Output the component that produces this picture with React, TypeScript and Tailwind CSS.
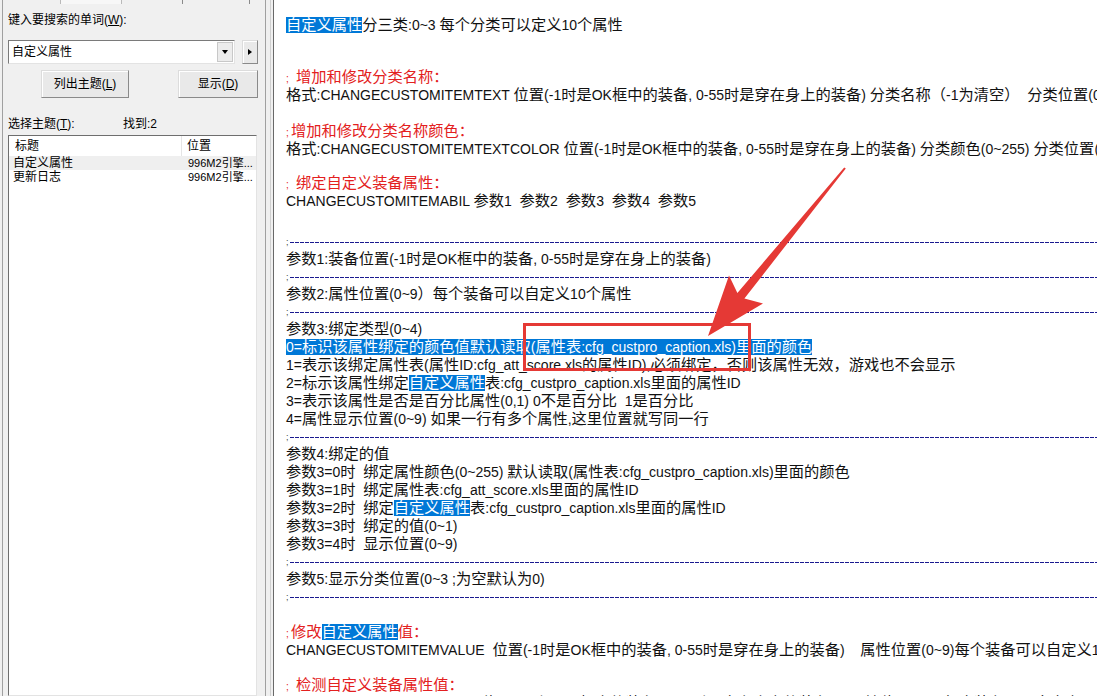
import React from 'react'

// CJK runs render a bit larger than the latin text, like the RichEdit font linking does
const CJK = /([\u3000-\u303f\u4e00-\u9fff\uff00-\uffef]+)/

const M = ({ t }: { t: string }) => (
  <>
    {t.split(CJK).map((s, i) =>
      i % 2 ? (
        <span key={i} className="text-[15.25px]">
          {s}
        </span>
      ) : (
        <React.Fragment key={i}>{s}</React.Fragment>
      )
    )}
  </>
)

const Hl = ({ t }: { t: string }) => (
  <span className="inline-block h-[16px] bg-[#0078d7] leading-[16px] text-white">
    <M t={t} />
  </span>
)

const Line = ({ children, className = '' }: { children: React.ReactNode; className?: string }) => (
  <div className={`h-[18px] whitespace-pre leading-[18px] ${className}`}>{children}</div>
)

const Note = ({ children, className = '', wide = false }: { children: React.ReactNode; className?: string; wide?: boolean }) => (
  <Line className={`text-[#e32020] ${className}`}>
    <span className={wide ? 'inline-block w-[10px] text-[10px]' : 'inline-block w-[5px] text-[10px]'}>;</span>
    {children}
  </Line>
)

const Sep = () => (
  <div className="flex h-[17px] items-center pt-[2px]">
    <span className="w-[4px] text-[9px] leading-none text-[#444]">;</span>
    <div className="h-px flex-1 bg-[repeating-linear-gradient(90deg,#1a1a90_0px,#1a1a90_4px,#ffffff_4px,#ffffff_5px)]" />
  </div>
)

const WinButton = ({ children, className = '' }: { children: React.ReactNode; className?: string }) => (
  <div
    className={`flex items-center justify-center border border-t-[#dcdcdc] border-l-[#dcdcdc] border-b-[#8a8a8a] border-r-[#8a8a8a] bg-[#e9e9e9] shadow-[inset_1px_1px_0_#ffffff] ${className}`}
  >
    {children}
  </div>
)

const LeftPanel = () => (
  <div className="flex w-[265px] shrink-0 flex-col bg-[#f0f0f0] text-[12px] text-black shadow-[inset_2px_0_0_#f0f0f0,inset_3px_0_0_#a0a0a0]">
    {/* tab strip remains */}
    <div className="flex h-[4px]">
      <div className="w-[61px] border-r border-[#b9b9b9]" />
      <div className="w-[61px] border-r border-[#b9b9b9] bg-[#f7f7f7]" />
      <div className="w-[61px] border-r border-[#8a8a8a]" />
      <div className="w-[67px] border-r border-[#8a8a8a]" />
    </div>

    <div className="mt-[9px] pl-[8px] leading-[14px]">
      键入要搜索的单词(<span className="underline">W</span>):
    </div>

    <div className="mt-[13px] flex pl-[8px]">
      <div className="flex h-[24px] w-[227px] items-center border border-t-[#7a7a7a] border-l-[#7a7a7a] border-b-[#e3e3e3] border-r-[#e3e3e3] bg-white">
        <span className="pl-[3px]">自定义属性</span>
        <div className="ml-auto mr-[1px] flex h-[20px] w-[16px] items-center justify-center border border-[#c8c8c8] bg-[#ececec]">
          <div className="h-0 w-0 border-x-[3.5px] border-t-[4px] border-x-transparent border-t-black" />
        </div>
      </div>
      <WinButton className="ml-[7px] h-[24px] w-[16px]">
        <div className="h-0 w-0 border-y-[3.5px] border-l-[4px] border-y-transparent border-l-black" />
      </WinButton>
    </div>

    <div className="mt-[6px] flex">
      <WinButton className="ml-[41px] h-[28px] w-[88px]">
        列出主题(<span className="underline">L</span>)
      </WinButton>
      <WinButton className="ml-[49px] h-[28px] w-[80px]">
        显示(<span className="underline">D</span>)
      </WinButton>
    </div>

    <div className="mt-[19px] flex pl-[8px] leading-[14px]">
      <span className="w-[115px]">
        选择主题(<span className="underline">T</span>):
      </span>
      <span>找到:2</span>
    </div>

    <div className="ml-[8px] mt-[4px] flex w-[249px] flex-1 flex-col border border-t-[#6e6e6e] border-l-[#6e6e6e] border-b-[#e3e3e3] border-r-[#e3e3e3] bg-white">
      <div className="flex h-[20px]">
        <div className="flex w-[173px] items-center border-r border-[#e5e5e5] pl-[6px]">标题</div>
        <div className="flex items-center pl-[5px]">位置</div>
      </div>
      <div className="flex h-[14px] bg-[#efefef] leading-[14px]">
        <div className="w-[173px] pl-[4px]">自定义属性</div>
        <div className="overflow-hidden whitespace-nowrap pl-[6px] text-[11px]">996M2引擎...</div>
      </div>
      <div className="flex h-[14px] leading-[14px]">
        <div className="w-[173px] pl-[4px]">更新日志</div>
        <div className="overflow-hidden whitespace-nowrap pl-[6px] text-[11px]">996M2引擎...</div>
      </div>
    </div>
  </div>
)

const Splitter = () => (
  <div className="flex w-[9px] shrink-0 bg-[#f0f0f0]">
    <div className="w-px bg-[#a0a0a0]" />
    <div className="w-[4px]" />
    <div className="w-px bg-[#d0d0d0]" />
    <div className="w-[2px]" />
    <div className="w-px bg-[#696969]" />
  </div>
)

const RightPane = () => (
  <div className="relative flex-1 overflow-hidden bg-white pl-[12px] pt-[16px] text-[14px] text-[#111]">
    <Line>
      <Hl t="自定义属性" />
      <M t="分三类:0~3 每个分类可以定义10个属性" />
    </Line>

    <Note wide className="mt-[34px]">
      <M t="增加和修改分类名称：" />
    </Note>
    <Line>
      <M t="格式:CHANGECUSTOMITEMTEXT 位置(-1时是OK框中的装备, 0-55时是穿在身上的装备) 分类名称（-1为清空）  分类位置(0~3)" />
    </Line>

    <Note className="mt-[18px]">
      <M t="增加和修改分类名称颜色：" />
    </Note>
    <Line>
      <M t="格式:CHANGECUSTOMITEMTEXTCOLOR 位置(-1时是OK框中的装备, 0-55时是穿在身上的装备) 分类颜色(0~255) 分类位置(0~3)" />
    </Line>

    <Note wide className="mt-[16px]">
      <M t="绑定自定义装备属性：" />
    </Note>
    <Line>
      <M t="CHANGECUSTOMITEMABIL 参数1  参数2  参数3  参数4  参数5" />
    </Line>

    <div className="mt-[23px]">
      <Sep />
    </div>
    <Line>
      <M t="参数1:装备位置(-1时是OK框中的装备, 0-55时是穿在身上的装备)" />
    </Line>
    <Sep />
    <Line>
      <M t="参数2:属性位置(0~9）每个装备可以自定义10个属性" />
    </Line>
    <Sep />
    <Line>
      <M t="参数3:绑定类型(0~4)" />
    </Line>
    <Line>
      <Hl t="0=标识该属性绑定的颜色值默认读取(属性表:cfg_custpro_caption.xls)里面的颜色" />
    </Line>
    <Line>
      <M t="1=表示该绑定属性表(属性ID:cfg_att_score.xls的属性ID),必须绑定，否则该属性无效，游戏也不会显示" />
    </Line>
    <Line>
      <M t="2=标示该属性绑定" />
      <Hl t="自定义属性" />
      <M t="表:cfg_custpro_caption.xls里面的属性ID" />
    </Line>
    <Line>
      <M t="3=表示该属性是否是百分比属性(0,1) 0不是百分比  1是百分比" />
    </Line>
    <Line>
      <M t="4=属性显示位置(0~9) 如果一行有多个属性,这里位置就写同一行" />
    </Line>
    <Sep />
    <Line>
      <M t="参数4:绑定的值" />
    </Line>
    <Line>
      <M t="参数3=0时  绑定属性颜色(0~255) 默认读取(属性表:cfg_custpro_caption.xls)里面的颜色" />
    </Line>
    <Line>
      <M t="参数3=1时  绑定属性表:cfg_att_score.xls里面的属性ID" />
    </Line>
    <Line>
      <M t="参数3=2时  绑定" />
      <Hl t="自定义属性" />
      <M t="表:cfg_custpro_caption.xls里面的属性ID" />
    </Line>
    <Line>
      <M t="参数3=3时  绑定的值(0~1)" />
    </Line>
    <Line>
      <M t="参数3=4时  显示位置(0~9)" />
    </Line>
    <Sep />
    <Line>
      <M t="参数5:显示分类位置(0~3 ;为空默认为0)" />
    </Line>
    <Sep />

    <Note className="mt-[18px]">
      <M t="修改" />
      <Hl t="自定义属性" />
      <M t="值：" />
    </Note>
    <Line>
      <M t="CHANGECUSTOMITEMVALUE  位置(-1时是OK框中的装备, 0-55时是穿在身上的装备)    属性位置(0~9)每个装备可以自定义10个属性" />
    </Line>

    <Note wide className="mt-[17px]">
      <M t="检测自定义装备属性值：" />
    </Note>
    <Line>
      <M t="CHECKCUSTOMITEMVALUE  位置(-1时是OK框中的装备, 0-55时是穿在身上的装备)    属性位置(0~9)每个装备可以自定义10个属性" />
    </Line>
  </div>
)

const App = () => {
  return (
    <div className="relative flex h-[696px] w-[1097px] overflow-hidden bg-white font-['Liberation_Sans','Noto_Sans_CJK_SC',sans-serif]">
      <LeftPanel />
      <Splitter />
      <RightPane />

      {/* annotation: red box + arrow drawn over the text */}
      <div className="pointer-events-none absolute left-[523px] top-[323px] h-[48px] w-[228px] border-[3px] border-[#e53935]" />
      <svg className="pointer-events-none absolute left-0 top-0" width="1097" height="696">
        <polygon
          points="844.2,167.4 737.4,292.9 729,275.6 708,336 763,303.4 744.4,298.5 845.8,168.6"
          fill="#e53935"
        />
      </svg>
    </div>
  )
}

export default App
